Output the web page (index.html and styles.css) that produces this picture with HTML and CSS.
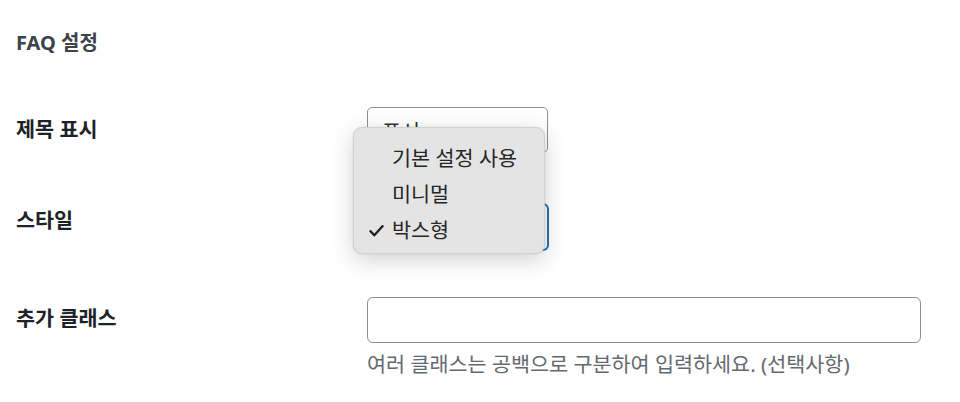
FILE: index.html
```html
<!DOCTYPE html>
<html lang="ko">
<head>
<meta charset="utf-8">
<title>FAQ 설정</title>
<link rel="stylesheet" href="styles.css">
</head>
<body>
<div class="page">
  <h2 class="title">FAQ 설정</h2>

  <div class="row row-1">
    <div class="label">제목 표시</div>
    <div class="field">
      <div class="select">
        <span class="select-text">표시</span>
        <svg class="chev" width="16" height="16" viewBox="0 0 16 16"><path d="M4 6l4 4 4-4" fill="none" stroke="#50575e" stroke-width="1.6" stroke-linecap="round" stroke-linejoin="round"/></svg>
      </div>
    </div>
  </div>

  <div class="row row-2">
    <div class="label label-2">스타일</div>
    <div class="field">
      <div class="select select-focus">
        <span class="select-text">박스형</span>
        <svg class="chev" width="16" height="16" viewBox="0 0 16 16"><path d="M4 6l4 4 4-4" fill="none" stroke="#50575e" stroke-width="1.6" stroke-linecap="round" stroke-linejoin="round"/></svg>
      </div>
    </div>
  </div>

  <div class="row row-3">
    <div class="label label-3">추가 클래스</div>
    <div class="field">
      <div class="input"></div>
      <p class="desc">여러 클래스는 공백으로 구분하여 입력하세요. (선택사항)</p>
    </div>
  </div>

  <div class="popup">
    <div class="item">기본 설정 사용</div>
    <div class="item">미니멀</div>
    <div class="item"><svg class="check" width="15" height="12" viewBox="0 0 15 12"><path d="M1.5 6.2L5.3 10.3L13.5 1.2" fill="none" stroke="#1f1f1f" stroke-width="2.3" stroke-linecap="round" stroke-linejoin="round"/></svg>박스형</div>
  </div>
</div>
</body>
</html>
```
FILE: styles.css
```css
html, body {
  margin: 0;
  padding: 0;
  background: #ffffff;
}
body {
  font-family: "Noto Sans", "Noto Sans CJK KR", sans-serif;
  color: #1d2327;
}
.page {
  position: relative;
  padding: 0 16px;
}
.title {
  margin: 0;
  padding-top: 31px;
  font-size: 20px;
  line-height: 24px;
  font-weight: 700;
  color: #3c434a;
}
.row {
  display: flex;
  align-items: flex-start;
}
.row-1 { margin-top: 52px; }
.row-2 { margin-top: 51px; }
.row-3 { margin-top: 47px; }
.label {
  width: 351px;
  flex: none;
  font-size: 20.7px;
  line-height: 28px;
  font-weight: 700;
  padding-top: 8px;
  color: #1d2327;
}
.label-2 { padding-top: 2px; }
.label-3 { padding-top: 7px; }
.field {
  flex: none;
}
.select {
  box-sizing: border-box;
  width: 181px;
  height: 46px;
  border: 1px solid #8c8f94;
  border-radius: 5px;
  display: flex;
  align-items: center;
  justify-content: space-between;
  padding: 0 12px 0 14px;
  font-size: 20.7px;
  color: #2c3338;
  background: #fff;
}
.select-focus {
  border-color: #2271b1;
  box-shadow: 0 0 0 1px #2271b1;
}
.input {
  box-sizing: border-box;
  width: 554px;
  height: 46px;
  border: 1px solid #8c8f94;
  border-radius: 6px;
  background: #fff;
}
.desc {
  margin: 7px 0 0;
  font-size: 20.7px;
  line-height: 28px;
  color: #646970;
}
.popup {
  position: absolute;
  left: 353px;
  top: 127px;
  box-sizing: border-box;
  width: 192px;
  height: 127px;
  padding-top: 12px;
  background: #e4e4e4;
  border: 1px solid #d0d0d0;
  border-radius: 9px;
  box-shadow: 0 6px 22px rgba(0, 0, 0, 0.18), 0 0 2px rgba(0, 0, 0, 0.1);
}
.item {
  position: relative;
  height: 36px;
  line-height: 36px;
  padding-left: 38px;
  font-size: 20.7px;
  color: #262626;
}
.check {
  position: absolute;
  left: 15px;
  top: 13px;
}
```
